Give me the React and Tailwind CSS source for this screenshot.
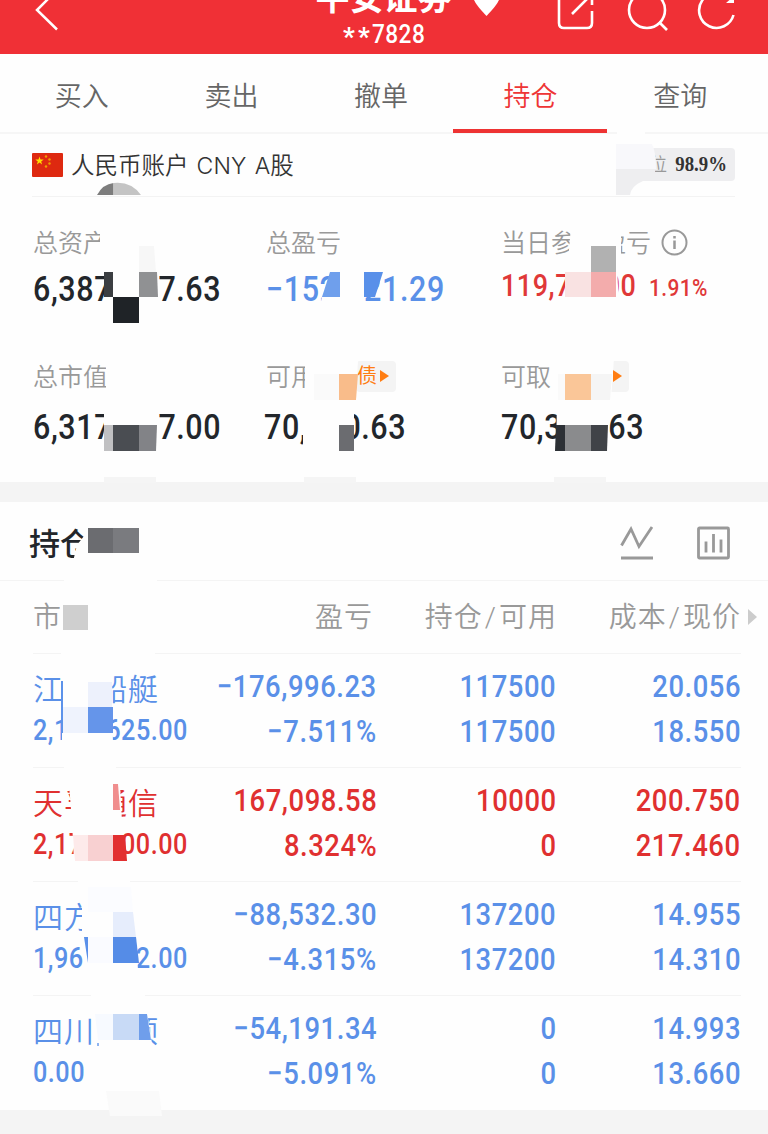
import React from "react";

const tabs = ["买入", "卖出", "撤单", "持仓", "查询"];

const holdings = [
  {
    name: ["江", "船艇"],
    value: ["2,1", "625.00"],
    profit: "−176,996.23",
    rate: "−7.511%",
    amount: "117500",
    available: "117500",
    cost: "20.056",
    price: "18.550",
  },
  {
    name: ["天孚", "通信"],
    value: ["2,17", "00.00"],
    profit: "167,098.58",
    rate: "8.324%",
    amount: "10000",
    available: "0",
    cost: "200.750",
    price: "217.460",
    up: true,
  },
  {
    name: ["四方", ""],
    value: ["1,96", "2.00"],
    profit: "−88,532.30",
    rate: "−4.315%",
    amount: "137200",
    available: "137200",
    cost: "14.955",
    price: "14.310",
  },
  {
    name: ["四川", "顶"],
    value: ["0.00", ""],
    profit: "−54,191.34",
    rate: "−5.091%",
    amount: "0",
    available: "0",
    cost: "14.993",
    price: "13.660",
  },
];

// white areas that hide parts of the texts: [points]
const covers = [
  "100,226 160,226 160,262 100,262",
  "340,226 400,226 400,262 336,262 340,245",
  "113,268 158,268 159,310 105,310 113,290",
  "340,268 364,268 364,306 320,306 322,297 340,297",
  "571,226 621,226 621,262 568,262",
  "565,268 617,268 619,304 565,304",
  "106,362 120,362 120,394 106,394",
  "305,360 358,360 356,400 305,400",
  "104,402 156,402 159,450 101,450 104,430",
  "303,402 354,402 354,450 303,450",
  "557,402 612,402 606,450 556,450",
  "558,358 614,358 611,400 558,400",
  "71,570 77,545 84,536 84,524 142,524 142,570",
  "64,578 157,578 157,583 64,583",
  "60,598 112,598 112,636 60,636",
  "61,651 155,651 155,656 61,656",
  "62,672 112,672 113,748 62,748",
  "64,765 116,765 116,770 64,770",
  "69,784 120,784 122,822 124,861 74,861 72,822",
  "78,879 130,879 130,884 78,884",
  "82,898 134,898 138,972 87,972 82,937",
  "91,993 145,993 145,998 91,998",
  "95,1012 147,1012 153,1050 97,1050",
  "617,130 645,130 645,136 617,136",
];

const cells = [
  ["104,272 113,272 113,297 104,297", "#3b3e42"],
  ["113,297 139,297 139,323 113,323", "#1f2327"],
  ["139,272 157,272 158,297 139,297", "#909193"],
  ["139,246 154,246 156,272 139,272", "#f7f7f7"],
  ["330,272 340,272 340,297 322,297", "#6f9fec"],
  ["364,272 383,272 375,297 364,297", "#5990e9"],
  ["591,246 616,246 616,272 591,272", "#b1b1b1"],
  ["565,272 591,272 591,297 565,297", "#f9e2e2"],
  ["591,272 616,272 616,297 591,297", "#f3acac"],
  ["314,374 339,374 339,400 314,400", "#fafafa"],
  ["339,374 358,374 356,400 339,400", "#f9bc8a"],
  ["558,374 565,374 565,400 558,400", "#fafafa"],
  ["565,374 591,374 591,400 565,400", "#fac698"],
  ["591,374 612,374 610,400 591,400", "#f5f5f5"],
  ["104,425 113,425 113,451 104,451", "#c0c0c2"],
  ["113,425 139,425 139,451 113,451", "#4a4d52"],
  ["139,425 157,425 156,451 139,451", "#828387"],
  ["339,425 354,425 354,451 339,451", "#6b6c70"],
  ["556,425 565,425 565,451 555,451", "#2c3035"],
  ["565,425 591,425 591,451 565,451", "#8a8b8d"],
  ["591,425 608,425 607,451 591,451", "#404348"],
  ["104,477 156,477 156,483 104,483", "#f5f5f5"],
  ["304,477 356,477 356,483 304,483", "#f5f5f5"],
  ["554,477 606,477 606,483 554,483", "#f5f5f5"],
  ["88,528 113,528 113,553 88,553", "#6b6c70"],
  ["113,528 139,528 139,553 113,553", "#7a7b7f"],
  ["63,605 88,605 88,630 63,630", "#cfcfcf"],
  ["61,681 63,681 63,733 61,733", "#5c92ea"],
  ["88,682 112,682 112,707 88,707", "#edf1fc"],
  ["63,707 88,707 88,733 63,733", "#eff3fd"],
  ["88,707 113,707 113,733 88,733", "#6595ea"],
  ["113,784 118,784 120,810 113,810", "#f08e8e"],
  ["73,835 88,835 88,861 75,861", "#fdeaea"],
  ["88,835 113,835 113,861 88,861", "#f8d0d1"],
  ["113,835 125,835 127,861 113,861", "#e22f30"],
  ["88,887 131,887 133,912 88,912", "#fbfcff"],
  ["113,912 133,912 136,937 113,937", "#e6edfc"],
  ["84,937 88,937 88,963", "#5a90e9"],
  ["88,937 113,937 113,963 88,963", "#fafbff"],
  ["113,937 136,937 139,963 113,963", "#558ce7"],
  ["95,1014 113,1014 113,1040 98,1040", "#f7faff"],
  ["113,1014 139,1014 139,1040 113,1040", "#c8daf6"],
  ["139,1014 147,1014 151,1040 139,1040", "#6f9eeb"],
  ["97,1043 99,1043 99,1046 97,1046", "#8fb4f0"],
  ["106,1091 159,1091 162,1116 110,1116", "#fafafa"],
];

function Mosaic() {
  return (
    <svg className="absolute top-0 left-0 pointer-events-none" width="768" height="1134" viewBox="0 0 768 1134">
      {covers.map((points) => (
        <polygon key={points} points={points} fill="#fefefe" />
      ))}
      <path d="M97 195 Q103 184 113.500 183 V195 Z" fill="#7d7d7d" />
      <path d="M113.500 183 Q131 181 141 195 H113.500 Z" fill="#c4c4c4" />
      <path d="M616 144 H652 Q656 152 656 169 H616 Z" fill="#f8f8fb" />
      <path d="M616 169 H655 V181 H643 Q631 186 630 195 H616 Z" fill="#eeeef0" />
      {cells.map(([points, fill]) => (
        <polygon key={points} points={points} fill={fill} />
      ))}
    </svg>
  );
}

// narrow digits
function Num({ children, className = "", left }) {
  return (
    <span
      className={`inline-block whitespace-nowrap font-medium scale-x-[0.87] tracking-[0.02em] ${left ? "origin-left" : "origin-right"} ${className}`}
    >
      {children}
    </span>
  );
}

function Figure({ label, extra, head, tail, width, color = "text-[#22262b]" }) {
  return (
    <div>
      <div className="flex items-center h-[36px] text-[25px] text-[#999] font-[350]">
        <span className="pt-[2px]">{label}</span>
        {extra}
      </div>
      <div className={`flex justify-between h-[44px] leading-[44px] text-[35px] ${width} ${color}`}>
        <Num left>{head}</Num>
        <Num>{tail}</Num>
      </div>
    </div>
  );
}

function Row({ item }) {
  const color = item.up ? "text-[#e03030]" : "text-[#5a90e8]";
  return (
    <div className={`flex h-[114px] border-b border-[#f4f4f4] last:border-transparent pt-[11px] ${color}`}>
      <div className="w-[155px]">
        <div className="flex justify-between w-[126px] h-[45px] pt-[3px] leading-[44px] text-[30px] tracking-[1px] font-[350] whitespace-nowrap">
          <span>{item.name[0]}</span>
          <span>{item.name[1]}</span>
        </div>
        <div className="flex justify-between h-[40px] leading-[40px] text-[29px]">
          <Num left>{item.value[0]}</Num>
          <Num>{item.value[1]}</Num>
        </div>
      </div>
      <Pair className="w-[190px]" top={item.profit} bottom={item.rate} />
      <Pair className="w-[180px]" top={item.amount} bottom={item.available} />
      <Pair className="w-[185px]" top={item.cost} bottom={item.price} />
    </div>
  );
}

function Pair({ top, bottom, className }) {
  return (
    <div className={`flex flex-col items-end text-[31.500px] leading-[45px] -mt-[1px] ${className}`}>
      <Num>{top}</Num>
      <Num>{bottom}</Num>
    </div>
  );
}

export default function App() {
  return (
    <div className="relative w-[768px] h-[1134px] overflow-hidden bg-[#fefefe] font-[Roboto,'Noto_Sans_CJK_SC',sans-serif]">
      <header className="flex justify-between h-[54px] bg-[#f03036] text-white overflow-hidden">
        <svg className="w-[315px]" height="54" viewBox="0 0 315 54" fill="none" stroke="#fff" strokeWidth="2.500">
          <path d="M57 -10 L37 10 L57 29.500" />
        </svg>
        <div className="w-[137px] flex flex-col items-center">
          <div className="-mt-[19px] h-[39px] leading-[34px] text-[34px] font-bold whitespace-nowrap">平安证券</div>
          <div className="flex items-center h-[28px] text-[26px] leading-[28px] font-medium">
            <span className="relative top-[3px] left-[5px] tracking-[3px] font-bold">**</span>
            <Num left className="ml-[4px] -mr-[4px]">7828</Num>
          </div>
        </div>
        <svg className="w-[316px]" height="54" viewBox="452 0 316 54" fill="none" stroke="#fff" strokeWidth="2.600">
          <path d="M474 0 H499 Q497 5 486.500 16 Q476 5 474 0 Z" fill="#fff" stroke="none" />
          <path d="M559 -4 V23 Q559 28 564 28 H587 Q592 28 592 23 V11 M592 5 V-4 M572 14 L590 -4" />
          <circle cx="647" cy="10" r="18" />
          <path d="M659 22 L667 30" />
          <path d="M733.500 15 A17.500 17.500 0 1 1 729 -2" />
          <path d="M726 3 H734 V-4 Z" fill="#fff" stroke="none" />
        </svg>
      </header>

      <nav className="flex h-[80px] pl-[7px] pr-[13px] border-b-2 border-[#f6f6f6] text-[27px] text-[#666] font-[350]">
        {tabs.map((tab) => (
          <div
            key={tab}
            className={`relative flex-1 flex justify-center pt-[23px] leading-[40px] ${tab === "持仓" ? "text-[#ee3535]" : ""}`}
          >
            {tab}
            {tab === "持仓" && <div className="absolute -left-[3px] -bottom-[1px] w-[154px] h-[4px] bg-[#ee3333]" />}
          </div>
        ))}
      </nav>

      <section className="ml-8 mr-[33px] h-[63px] flex items-center justify-between border-b border-[#f3f3f3]">
        <div className="flex items-center text-[23.500px] text-[#333] font-[350]">
          <svg className="mr-[8px]" width="31" height="24" viewBox="0 0 31 24">
            <rect width="31" height="24" rx="1" fill="#de2910" />
            <path d="M7.500 3.500 L8.500 6.500 H11.700 L9.200 8.400 L10.100 11.500 L7.500 9.600 L4.900 11.500 L5.800 8.400 L3.300 6.500 H6.500 Z" fill="#ffde00" />
            <g fill="#f0a000">
              <circle cx="14" cy="3.500" r="1.200" />
              <circle cx="17.500" cy="6.500" r="1.200" />
              <circle cx="17.500" cy="10.500" r="1.200" />
              <circle cx="14" cy="13.500" r="1.200" />
            </g>
          </svg>
          <span className="pt-[4px] whitespace-nowrap">
            人民币账户<span className="font-[Inter,sans-serif] text-[23px] mx-[8px] tracking-[0.2px]">CNY</span>
            <span className="font-[Inter,sans-serif] text-[23px]">A</span>股
          </span>
        </div>
        <div className="-mt-[2px] flex items-center justify-end w-[96px] h-[33px] pr-[8px] rounded-sm bg-[#eeeef0]">
          <span className="mr-[5px] pt-px text-[18px] text-[#999] font-[350]">位</span>
          <span className="text-[20px] text-[#333] font-semibold font-['Liberation_Serif',serif] inline-block origin-right scale-x-[0.94]">98.9%</span>
        </div>
      </section>

      <section className="h-[285px] pl-[33px] pt-[28px] grid grid-cols-[233px_235px_1fr] grid-rows-[134px_1fr]">
        <Figure label="总资产" head="6,387" tail="7.63" width="mt-[7px] w-[188px]" />
        <Figure label="总盈亏" head="−152" tail="21.29" width="mt-[7px] w-[179px]" color="text-[#5a90e8]" />
        <div>
          <div className="flex items-center h-[36px] text-[25px] text-[#999] font-[350]">
            <span className="pt-[2px]">当日参考盈亏</span>
            <svg className="ml-[10px] -mt-px" width="27" height="27" viewBox="0 0 27 27" fill="none" stroke="#999" strokeWidth="2">
              <circle cx="13.500" cy="13.500" r="12" />
              <path d="M13.500 7 V9.500 M13.500 11.500 V20" strokeWidth="2.500" />
            </svg>
          </div>
          <div className="flex mt-[3px] h-[44px] text-[#e03838]">
            <div className="flex justify-between w-[135px] leading-[44px] text-[31px]">
              <Num left>119,7</Num>
              <Num>00</Num>
            </div>
            <Num left className="ml-[13px] mt-[2px] text-[24px] leading-[44px]">1.91%</Num>
          </div>
        </div>
        <Figure label="总市值" head="6,317" tail="7.00" width="mt-[11px] w-[188px]" />
        <Figure
          label="可用"
          head="70,"
          tail="0.63"
          width="mt-[11px] -ml-[2px] w-[142px]"
          extra={
            <div className="ml-[40px] -mt-[2px] flex items-center justify-end w-[40px] h-[31px] pr-[7px] rounded bg-[#f4f4f4]">
              <span className="text-[20px] text-[#ff7d12] font-normal">债</span>
              <svg className="ml-[3px]" width="9" height="14" viewBox="0 0 9 14" fill="#ff7d12">
                <path d="M0 1 L9 7 L0 13 Z" />
              </svg>
            </div>
          }
        />
        <Figure
          label="可取"
          head="70,3"
          tail="63"
          width="mt-[11px] w-[143px]"
          extra={
            <div className="ml-[38px] -mt-[2px] flex items-center justify-end w-[40px] h-[31px] pr-[7px] rounded bg-[#f4f4f4]">
              <svg width="9" height="14" viewBox="0 0 9 14" fill="#ff7d12">
                <path d="M0 1 L9 7 L0 13 Z" />
              </svg>
            </div>
          }
        />
      </section>

      <div className="h-[20px] bg-[#f4f4f4]" />

      <section className="flex items-center justify-between h-[79px] pl-[29px] pr-[38px] pt-[4px] border-b border-[#f4f4f4]">
        <h2 className="pt-[5px] text-[31px] text-[#22262b] font-medium">持仓</h2>
        <div className="flex gap-[43px]">
          <svg width="34" height="34" viewBox="0 0 34 34" fill="none" stroke="#999" strokeWidth="2.800">
            <path d="M1.500 19.500 L11 3 L19 20.500 L32 1" />
            <path d="M1 32 H33" strokeWidth="3" />
          </svg>
          <svg width="33" height="34" viewBox="0 0 33 34" fill="none" stroke="#999" strokeWidth="2.800">
            <rect x="1.500" y="2" width="30" height="30" rx="1" />
            <path d="M9 15.500 V26.500 M16.500 8 V26.500 M24 13.500 V26.500" />
          </svg>
        </div>
      </section>

      <section className="ml-[33px] mr-[27px]">
        <div className="flex h-[73px] pt-[2px] border-b border-[#f4f4f4] leading-[70px] text-[28px] text-[#999] font-[350] tracking-[1px]">
          <div className="w-[155px]">市</div>
          <div className="w-[185px] text-right">盈亏</div>
          <div className="w-[184px] text-right whitespace-nowrap">持仓<span className="px-[2px]">/</span>可用</div>
          <div className="relative w-[184px] text-right whitespace-nowrap">
            成本<span className="px-[2px]">/</span>现价
            <svg className="absolute -right-[16px] top-[26px]" width="9" height="16" viewBox="0 0 9 16" fill="#ccc">
              <path d="M0 0 L9 8 L0 16 Z" />
            </svg>
          </div>
        </div>
        {holdings.map((item) => (
          <Row key={item.profit} item={item} />
        ))}
      </section>

      <div className="h-[26px] bg-[#f4f4f4]" />
      <Mosaic />
    </div>
  );
}
